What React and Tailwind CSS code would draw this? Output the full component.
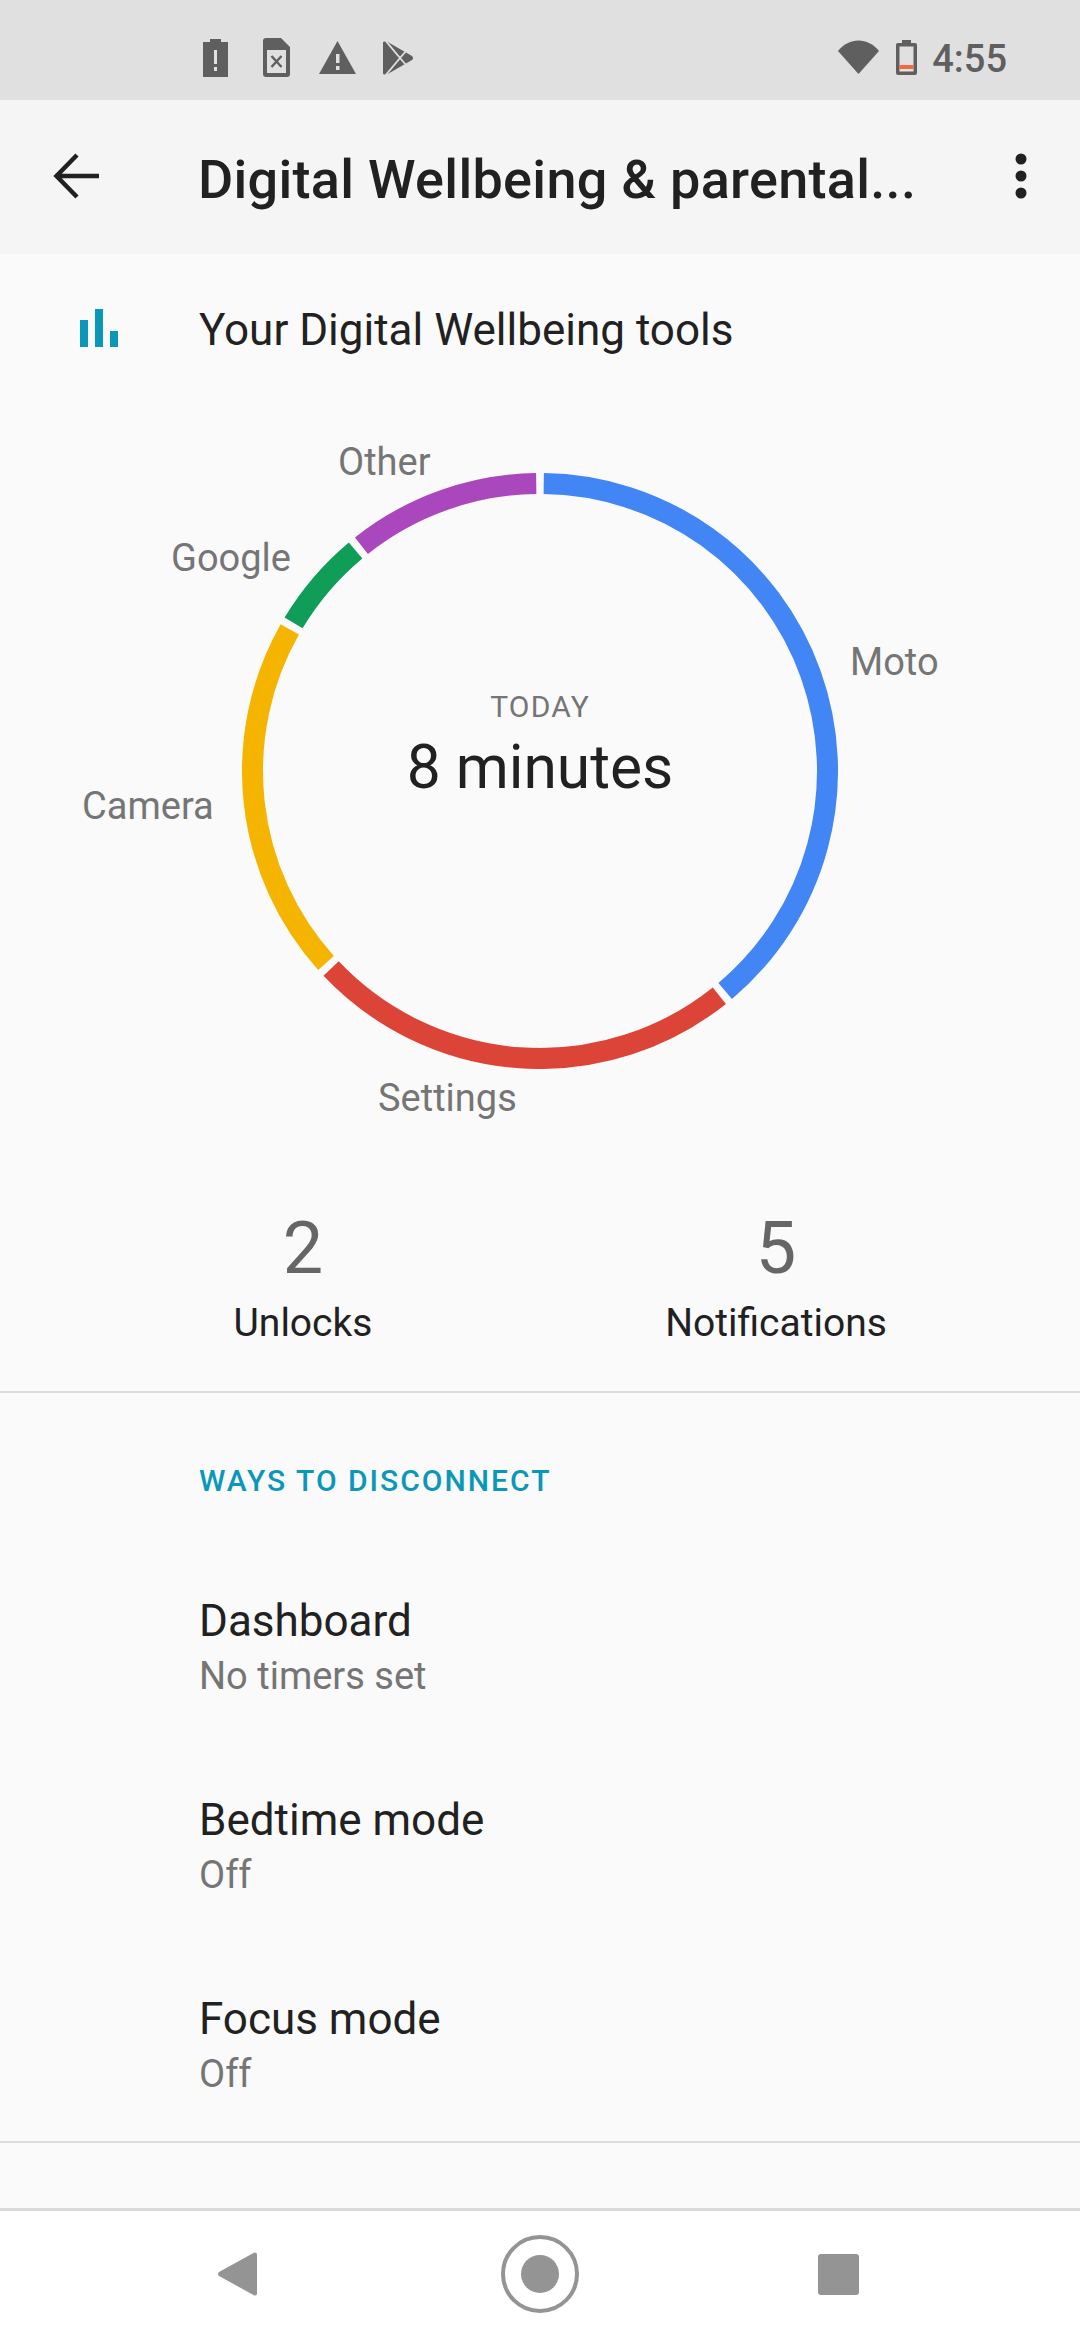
const segments = [
  { color: '#4285f4', from: 0.75, to: 139.9 },
  { color: '#db4437', from: 141.4, to: 226.6 },
  { color: '#f4b400', from: 228.1, to: 299.5 },
  { color: '#0f9d58', from: 301, to: 320.1 },
  { color: '#ab47bc', from: 321.6, to: 359.25 },
];

function arcPath(from, to) {
  const r = 287.5;
  const cx = 298;
  const cy = 298;
  const point = (deg) => {
    const a = (deg * Math.PI) / 180;
    return `${cx + r * Math.sin(a)} ${cy - r * Math.cos(a)}`;
  };
  return `M ${point(from)} A ${r} ${r} 0 ${to - from > 180 ? 1 : 0} 1 ${point(to)}`;
}

function StatusBar() {
  return (
    <div className="flex h-[100px] items-center bg-[#e0e0e0] pl-[203px] pr-[73px] text-[#5f5f5f]">
      <svg width="25" height="38" viewBox="0 0 25 38" className="mt-[16px]">
        <path fill="#5f5f5f" fillRule="evenodd" d="M7 0h11v3h7v35H0V3h7zM11 11v14h3V11zM11 28v4h3v-4z" />
      </svg>
      <svg width="27" height="39" viewBox="0 0 27 39" className="ml-[35px] mt-[15px]">
        <path fill="#5f5f5f" fillRule="evenodd" d="M3 0h15l9 9v27a3 3 0 0 1-3 3H3a3 3 0 0 1-3-3V3a3 3 0 0 1 3-3zM4 12v23h19V12z" />
        <path stroke="#5f5f5f" strokeWidth="2.4" d="M8.5 18l10 11M18.5 18l-10 11" />
      </svg>
      <svg width="37" height="33" viewBox="0 0 37 33" className="ml-[29px] mt-[15px]">
        <path fill="#5f5f5f" fillRule="evenodd" d="M18.5 0L37 33H0zM17 13v9h3.500v-9zM17 25v4h3.500v-4z" />
      </svg>
      <svg width="31" height="34" viewBox="0 0 31 34" className="ml-[27px] mt-[15px]">
        <path fill="#5f5f5f" d="M0 1L3 0L29 15a2.500 2.500 0 0 1 0 4L3 34L0 33z" />
        <path fill="none" stroke="#e0e0e0" strokeWidth="1.800" d="M2 -1L17 17L2 35M17 17L23 10M17 17L23 24" />
      </svg>
      <div className="flex-1" />
      <svg width="41" height="34" viewBox="0 0 41 34" className="mt-[14px]">
        <path fill="#5f5f5f" d="M0 11C11-3 30-3 41 11L20.500 34z" />
      </svg>
      <svg width="21" height="35" viewBox="0 0 21 35" className="ml-[17px] mt-[15px]">
        <path fill="#5f5f5f" fillRule="evenodd" d="M6 0h9v3h4a2 2 0 0 1 2 2v28a2 2 0 0 1-2 2H2a2 2 0 0 1-2-2V5a2 2 0 0 1 2-2h4zM3.500 6.500v25h14v-25z" />
        <rect x="3.500" y="25" width="14" height="4" fill="#f4683a" />
      </svg>
      <span className="ml-[15px] mt-[17px] text-[38px] font-medium leading-none">4:55</span>
    </div>
  );
}

function Header() {
  return (
    <div className="flex h-[154px] items-center bg-[#f5f5f5] text-[#212121]">
      <svg width="48" height="48" viewBox="0 0 48 48" className="ml-[53px] mt-[-2px]">
        <path fill="none" stroke="#212121" strokeWidth="4.500" d="M46 24H5M24 3L3.500 24 24 45" />
      </svg>
      <h1 className="ml-[97px] mt-[5px] w-[780px] whitespace-nowrap text-[54px] font-medium leading-none tracking-[0.3px]">
        Digital Wellbeing &amp; parental...
      </h1>
      <svg width="12" height="46" viewBox="0 0 12 46" className="ml-[37px] mt-[-2px]">
        <circle cx="6" cy="6" r="5.500" fill="#212121" />
        <circle cx="6" cy="23" r="5.500" fill="#212121" />
        <circle cx="6" cy="40" r="5.500" fill="#212121" />
      </svg>
    </div>
  );
}

function UsageChart() {
  return (
    <div className="relative h-[764px]">
      <svg width="596" height="596" viewBox="0 0 596 596" className="absolute left-[242px] top-[67px]">
        {segments.map((s) => (
          <path key={s.color} d={arcPath(s.from, s.to)} fill="none" stroke={s.color} strokeWidth="21" />
        ))}
      </svg>
      <span className="absolute left-[338px] top-[32px] text-[38px] leading-[48px] text-[#757575]">Other</span>
      <span className="absolute left-[171px] top-[128px] text-[38px] leading-[48px] text-[#757575]">Google</span>
      <span className="absolute left-[850px] top-[232px] text-[38px] leading-[48px] text-[#757575]">Moto</span>
      <span className="absolute left-[82px] top-[376px] text-[38px] leading-[48px] text-[#757575]">Camera</span>
      <span className="absolute left-[378px] top-[668px] text-[38px] leading-[48px] text-[#757575]">Settings</span>
      <div className="absolute inset-x-0 top-[283px] flex flex-col items-center">
        <span className="text-[30px] leading-[36px] tracking-[1.2px] text-[#757575]">TODAY</span>
        <span className="mt-[8px] text-[60.5px] leading-[70px] text-[#212121]">8 minutes</span>
      </div>
    </div>
  );
}

function Stat({ value, label, className }) {
  return (
    <div className={`flex flex-col items-center ${className}`}>
      <span className="text-[72px] leading-[84px] text-[#666666]">{value}</span>
      <span className="mt-[8px] whitespace-nowrap text-[39px] leading-[48px] text-[#212121]">{label}</span>
    </div>
  );
}

function Row({ title, subtitle }) {
  return (
    <div className="flex h-[199px] flex-col pl-[199px] pt-[49px] last:h-[197px]">
      <span className="text-[44px] leading-[52px] text-[#212121]">{title}</span>
      <span className="mt-[6px] text-[38px] leading-[46px] text-[#757575]">{subtitle}</span>
    </div>
  );
}

export default function App() {
  return (
    <div className="flex h-[2340px] w-[1080px] flex-col overflow-hidden bg-[#fafafa] font-['Roboto',sans-serif]">
      <StatusBar />
      <Header />
      <div className="flex h-[152px] items-center">
        <svg width="38" height="38" viewBox="0 0 38 38" className="ml-[80px] mt-[-4px]">
          <rect x="0" y="11" width="8" height="27" fill="#0a97b8" />
          <rect x="15" y="0" width="8" height="38" fill="#0a97b8" />
          <rect x="30" y="22" width="8" height="16" fill="#0a97b8" />
        </svg>
        <span className="ml-[81px] text-[44px] leading-none text-[#212121]">Your Digital Wellbeing tools</span>
      </div>
      <UsageChart />
      <div className="flex h-[223px] border-b-[2px] border-[#dcdcdc] pt-[37px]">
        <Stat value="2" label="Unlocks" className="ml-[203px] w-[200px]" />
        <Stat value="5" label="Notifications" className="ml-[273px] w-[200px]" />
      </div>
      <div className="flex h-[153px] items-center pl-[199px] pt-[22px]">
        <span className="text-[30px] font-medium leading-none tracking-[2px] text-[#0a97b8]">WAYS TO DISCONNECT</span>
      </div>
      <div className="flex flex-col border-b-[2px] border-[#dcdcdc]">
        <Row title="Dashboard" subtitle="No timers set" />
        <Row title="Bedtime mode" subtitle="Off" />
        <Row title="Focus mode" subtitle="Off" />
      </div>
      <div className="flex-1" />
      <div className="flex h-[132px] items-center border-t-[3px] border-[#d9d9d9] bg-white pb-[3px] pl-[218px]">
        <svg width="39" height="44" viewBox="0 0 39 44">
          <path fill="#949494" d="M37 0.500a2 2 0 0 1 2 2v39a2 2 0 0 1-2 2 2 2 0 0 1-1.500-.5L1 24a2.500 2.500 0 0 1 0-4L35.500 1a2 2 0 0 1 1.500-.5z" />
        </svg>
        <svg width="78" height="78" viewBox="0 0 78 78" className="ml-[244px]">
          <circle cx="39" cy="39" r="37" fill="none" stroke="#949494" strokeWidth="4" />
          <circle cx="39" cy="39" r="19" fill="#949494" />
        </svg>
        <div className="ml-[239px] h-[41px] w-[41px] rounded-[3px] bg-[#949494]" />
      </div>
    </div>
  );
}
